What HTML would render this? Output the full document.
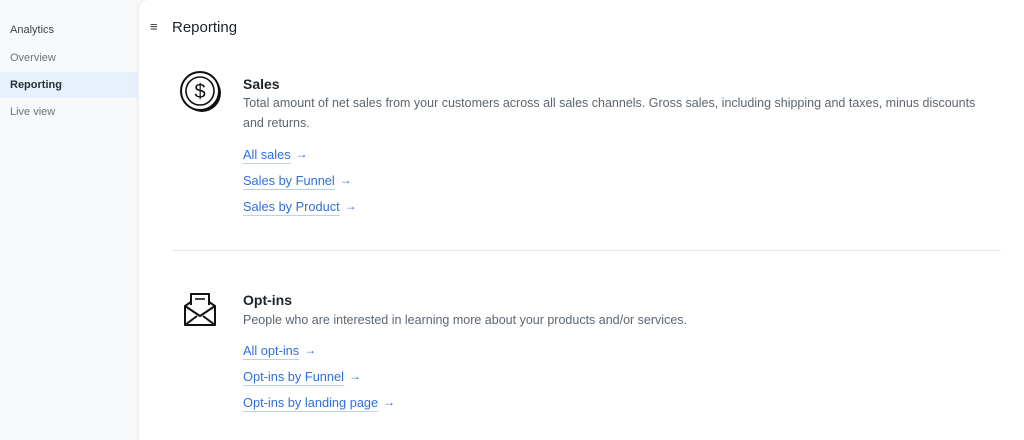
<!DOCTYPE html>
<html><head><style>
*{margin:0;padding:0;box-sizing:border-box}
body{width:1024px;height:423px;overflow:hidden;background:#f8f9fa;font-family:"Liberation Sans",sans-serif;position:relative}
.side div{position:absolute;left:0;width:138px;font-size:11px;padding-left:10px;color:#6b7480}
.main{position:absolute;left:139px;top:0;width:900px;height:440px;background:#fff;border-top-left-radius:10px;box-shadow:0 0 6px rgba(0,0,0,.08)}
.a{position:absolute}
h2{position:absolute;font-size:14px;font-weight:bold;color:#1d232a}
p{position:absolute;font-size:12.5px;line-height:20px;color:#5c6670;width:780px;white-space:nowrap}
.l{position:absolute;font-size:12.8px;color:#2f6fdc;line-height:16px;border-bottom:1px solid #b9d0f2}
.l span{position:absolute;right:-17px;top:-1px;font-size:12px;font-weight:bold}
</style></head><body>
<div class="side">
<div style="top:24px;color:#3b434c">Analytics</div>
<div style="top:52px">Overview</div>
<div style="top:72px;height:26px;line-height:26px;background:#e7f1fc;color:#2a3038;font-weight:bold">Reporting</div>
<div style="top:106px">Live view</div>
</div>
<div class="main">
<div class="a" style="left:11px;top:19px;font-size:13px;color:#333">&#8801;</div>
<div class="a" style="left:33px;top:19px;font-size:15px;color:#1d232a">Reporting</div>
<svg class="a" style="left:41px;top:71px" width="44" height="44" viewBox="0 0 44 44"><circle cx="22" cy="22" r="19" fill="#111"/><circle cx="20" cy="20" r="19" fill="#fff" stroke="#111" stroke-width="2"/><circle cx="20" cy="20" r="14" fill="none" stroke="#111" stroke-width="1.6"/><text x="20" y="27" text-anchor="middle" font-size="20" font-family="Liberation Sans" fill="#111">$</text></svg>
<h2 style="left:104px;top:76px">Sales</h2>
<p style="left:104px;top:93px">Total amount of net sales from your customers across all sales channels. Gross sales, including shipping and taxes, minus discounts<br>and returns.</p>
<div class="l" style="left:104px;top:147px">All sales<span>&#8594;</span></div>
<div class="l" style="left:104px;top:173px">Sales by Funnel<span>&#8594;</span></div>
<div class="l" style="left:104px;top:199px">Sales by Product<span>&#8594;</span></div>
<div class="a" style="left:33px;top:250px;width:829px;height:1px;background:#e4e6e8"></div>
<svg class="a" style="left:43px;top:292px" width="36" height="36" viewBox="0 0 36 36" fill="none" stroke="#111" stroke-width="2" stroke-linejoin="round"><path d="M9 13V2h18v11"/><path d="M13 7h10" stroke-width="1.6"/><path d="M9 10L3 14v19h30V14l-6-4"/><path d="M3 14l15 10 15-10M3 33l12-9M33 33l-12-9"/></svg>
<h2 style="left:104px;top:292px">Opt-ins</h2>
<p style="left:104px;top:310px">People who are interested in learning more about your products and/or services.</p>
<div class="l" style="left:104px;top:343px">All opt-ins<span>&#8594;</span></div>
<div class="l" style="left:104px;top:369px">Opt-ins by Funnel<span>&#8594;</span></div>
<div class="l" style="left:104px;top:395px">Opt-ins by landing page<span>&#8594;</span></div>
</div>
</body></html>
